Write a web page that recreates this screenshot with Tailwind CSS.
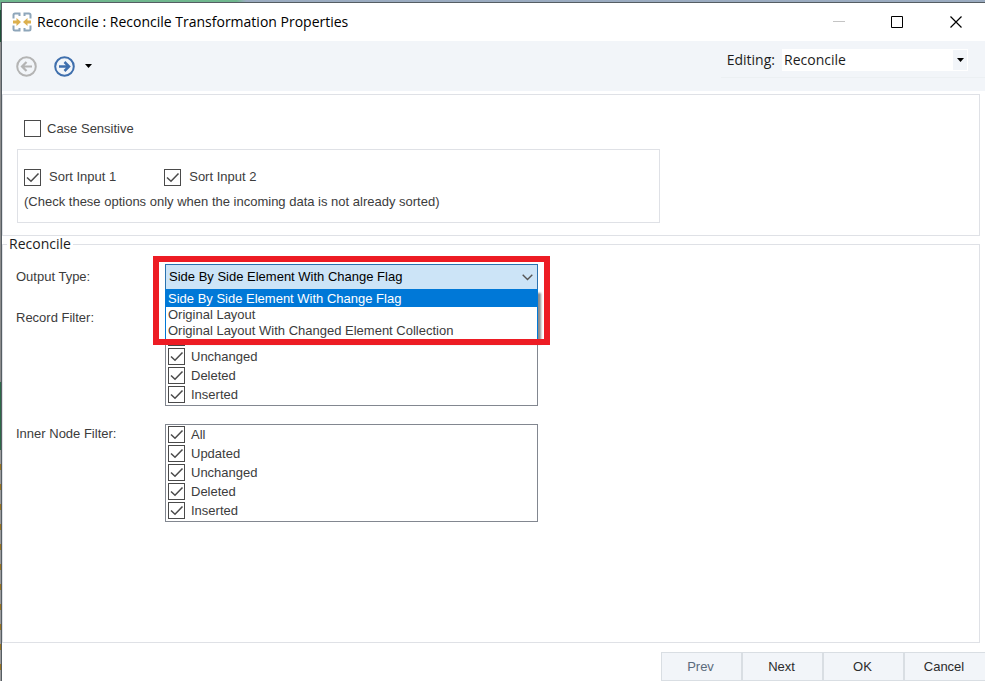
<!DOCTYPE html>
<html lang="en">
  <head>
  <meta charset="utf-8">
  <meta name="viewport" content="width=device-width, initial-scale=1">
  <title>Reconcile : Reconcile Transformation Properties</title>
  <script src="https://cdn.jsdelivr.net/npm/@tailwindcss/browser@4"></script>
</head>

  <body class="bg-white font-['Liberation_Sans',sans-serif] text-[13px] leading-5 text-[#3c3c3c] antialiased">
    <!-- desktop behind the window -->
    <div class="flex min-h-screen flex-col">
      <div class="h-[2px] bg-linear-to-r from-[#6fb78e] from-24% to-[#9aabc0] to-25%"></div>
      <div class="flex flex-1">
        <div class="flex w-px flex-col">
          <div class="h-2 bg-[#5fa57f]"></div>
          <div class="h-8 bg-[#1f5237]"></div>
          <div class="h-[340px] bg-[#8c8c8c]"></div>
          <div class="h-[68px] bg-[#2d6a48]"></div>
          <div class="flex-1 bg-[repeating-linear-gradient(#9c9c9c_0_14px,#9a7420_14px_20px)]"></div>
        </div>

        <!-- window -->
        <div class="flex flex-1 flex-col border-t border-l border-[#555d63]">
          <header class="flex h-[38px] items-center pl-[10px] font-['Open_Sans',sans-serif] text-black">
            <svg class="h-5 w-5" viewBox="0 0 20 20" fill="none">
              <path d="M1.500 6.500V3Q1.500 1.500 3 1.500H7.500V4M1.500 13.500V17Q1.500 18.500 3 18.500H7.500V16M12.500 4V1.500H17Q18.500 1.500 18.500 3V6.500M12.500 16V18.500H17Q18.500 18.500 18.500 17V13.500" stroke="#8ea6ba" stroke-width="2"/>
              <path d="M1 8.500H4.500V6L9 10L4.500 14V11.500H1ZM19 8.500H15.500V6L11 10L15.500 14V11.500H19Z" fill="#dcb04e"/>
            </svg>
            <h1 class="ml-[5px] flex-1 text-sm">Reconcile : Reconcile Transformation Properties</h1>
            <button class="flex h-full w-[58px] items-center justify-center" aria-label="Minimize">
              <svg class="h-3 w-3" viewBox="0 0 12 12"><path d="M0 5.500H12" stroke="#c4c4c4"/></svg>
            </button>
            <button class="flex h-full w-[58px] items-center justify-center" aria-label="Maximize">
              <svg class="h-3 w-3" viewBox="0 0 12 12" fill="none"><path d="M.5 .5H11.500V11.500H.5Z" stroke="#000"/></svg>
            </button>
            <button class="flex h-full w-[59px] items-center justify-center" aria-label="Close">
              <svg class="h-3 w-3" viewBox="0 0 12 12"><path d="M.5 .5L11.500 11.500M11.500 .5L.5 11.500" stroke="#000" stroke-width="1.200"/></svg>
            </button>
          </header>

          <nav class="flex h-[50px] items-center bg-[#f2f5f9] pl-[14px]">
            <button disabled aria-label="Back">
              <svg class="h-[21px] w-[21px]" viewBox="0 0 21 21" fill="none" stroke="#b4b4b4">
                <circle cx="10.500" cy="10.500" r="9.300" stroke-width="2"/>
                <path d="M16 10.500H6M10.500 6L6 10.500L10.500 15" stroke-width="2.200"/>
              </svg>
            </button>
            <button class="ml-[17px]" aria-label="Forward">
              <svg class="h-[21px] w-[21px]" viewBox="0 0 21 21" fill="none" stroke="#3f6fad">
                <circle cx="10.500" cy="10.500" r="9.300" stroke-width="2"/>
                <path d="M5 10.500H15M10.500 6L15 10.500L10.500 15" stroke-width="2.500"/>
              </svg>
            </button>
            <button class="ml-[10px]" aria-label="History">
              <svg class="h-1 w-[7px]" viewBox="0 0 7 4"><path d="M0 0H7L3.500 4Z" fill="#000"/></svg>
            </button>
            <div class="mb-[6px] ml-auto flex items-center border-b border-[#ecf0f3] pr-[17px] pb-[6px] pl-[6px] font-['Open_Sans',sans-serif] text-sm text-[#1c1c1c]">
              <label for="editing">Editing:</label>
              <div class="ml-[7px] grid w-[186px] items-center bg-white">
                <select id="editing" class="col-start-1 row-start-1 h-[22px] appearance-none pl-[2px]">
                  <option>Reconcile</option>
                </select>
                <span class="pointer-events-none col-start-1 row-start-1 mr-px flex h-5 w-[14px] items-center justify-center justify-self-end bg-[#f2f5f9]">
                  <svg class="h-1 w-[7px]" viewBox="0 0 7 4"><path d="M0 0H7L3.500 4Z" fill="#000"/></svg>
                </span>
              </div>
            </div>
          </nav>

          <main class="mt-[3px] mr-[5px] flex flex-1 flex-col">
            <section class="border border-[#dfe1e6] px-[14px] pt-[25px] pb-[12px]">
              <label class="ml-[7px] flex h-[17px] items-center gap-[6px]">
                <input type="checkbox" class="size-[17px] appearance-none border border-[#4a4a4a]">
                Case Sensitive
              </label>
              <div class="mt-[12px] h-[74px] w-[643px] max-w-full border border-[#dfe1e6] pt-[17px] pl-[6px]">
                <div class="flex gap-12">
                  <label class="flex items-center gap-2">
                    <span class="grid">
                      <input type="checkbox" checked class="peer col-start-1 row-start-1 size-[17px] appearance-none border border-[#4a4a4a]">
                      <svg class="pointer-events-none invisible col-start-1 row-start-1 size-[17px] peer-checked:visible" viewBox="0 0 17 17" fill="none"><path d="M3 8.500L7 12.200L14.500 4.500" stroke="#4a4a4a" stroke-width="1.500"/></svg>
                    </span>
                    Sort Input 1
                  </label>
                  <label class="flex items-center gap-2">
                    <span class="grid">
                      <input type="checkbox" checked class="peer col-start-1 row-start-1 size-[17px] appearance-none border border-[#4a4a4a]">
                      <svg class="pointer-events-none invisible col-start-1 row-start-1 size-[17px] peer-checked:visible" viewBox="0 0 17 17" fill="none"><path d="M3 8.500L7 12.200L14.500 4.500" stroke="#4a4a4a" stroke-width="1.500"/></svg>
                    </span>
                    Sort Input 2
                  </label>
                </div>
                <p class="mt-[5px]">(Check these options only when the incoming data is not already sorted)</p>
              </div>
            </section>

            <fieldset class="flex-1 border border-[#dfe1e6]">
              <legend class="ml-[4px] px-[2px] font-['Open_Sans',sans-serif] text-sm leading-4 text-[#1c1c1c]">Reconcile</legend>
              <div class="grid grid-cols-[149px_373px] items-start gap-y-[18px] pt-[12px] pl-[13px] leading-5">
                <label for="output-type" class="self-center">Output Type:</label>
                <div class="relative grid items-center">
                  <select id="output-type" class="col-start-1 row-start-1 h-[26px] appearance-none border border-[#2a72b0] bg-[#cce4f7] pl-[3px] text-black">
                    <option>Side By Side Element With Change Flag</option>
                    <option>Original Layout</option>
                    <option>Original Layout With Changed Element Collection</option>
                  </select>
                  <svg class="pointer-events-none col-start-1 row-start-1 mr-[5px] h-[7px] w-[11px] justify-self-end" viewBox="0 0 11 7" fill="none"><path d="M.7 .7L5.500 5.500L10.300 .7" stroke="#555" stroke-width="1.400"/></svg>
                  <!-- open list -->
                  <ul role="listbox" aria-label="Output Type" class="absolute inset-x-0 top-[25px] z-10 border border-[#0078d7] bg-white leading-4 shadow-[3px_4px_2px_rgba(0,0,0,0.45)]">
                    <li role="option" aria-selected="true" class="bg-[#0078d7] pl-[2px] leading-[17px] text-white">Side By Side Element With Change Flag</li>
                    <li role="option" class="pl-[2px]">Original Layout</li>
                    <li role="option" class="pl-[2px]">Original Layout With Changed Element Collection</li>
                  </ul>
                  <!-- highlight frame -->
                  <div class="pointer-events-none absolute -inset-x-[12px] -top-[8px] z-20 h-[89px] border-6 border-[#ed1c24]"></div>
                </div>

                <span id="record-filter">Record Filter:</span>
                <div role="group" aria-labelledby="record-filter" class="border border-[#828790] pb-px pl-[2px]">
                  <div class="flex h-[19px] items-center">
                    <input type="checkbox" checked aria-label="All" class="size-[17px] appearance-none border border-[#4a4a4a]">
                  </div>
                  <div class="flex h-[19px] items-center">
                    <input type="checkbox" checked aria-label="Updated" class="size-[17px] appearance-none border border-[#4a4a4a]">
                  </div>
                  <label class="flex h-[19px] items-center gap-[6px]">
                    <span class="grid">
                      <input type="checkbox" checked class="peer col-start-1 row-start-1 size-[17px] appearance-none border border-[#4a4a4a]">
                      <svg class="pointer-events-none invisible col-start-1 row-start-1 size-[17px] peer-checked:visible" viewBox="0 0 17 17" fill="none"><path d="M3 8.500L7 12.200L14.500 4.500" stroke="#4a4a4a" stroke-width="1.500"/></svg>
                    </span>
                    Unchanged
                  </label>
                  <label class="flex h-[19px] items-center gap-[6px]">
                    <span class="grid">
                      <input type="checkbox" checked class="peer col-start-1 row-start-1 size-[17px] appearance-none border border-[#4a4a4a]">
                      <svg class="pointer-events-none invisible col-start-1 row-start-1 size-[17px] peer-checked:visible" viewBox="0 0 17 17" fill="none"><path d="M3 8.500L7 12.200L14.500 4.500" stroke="#4a4a4a" stroke-width="1.500"/></svg>
                    </span>
                    Deleted
                  </label>
                  <label class="flex h-[19px] items-center gap-[6px]">
                    <span class="grid">
                      <input type="checkbox" checked class="peer col-start-1 row-start-1 size-[17px] appearance-none border border-[#4a4a4a]">
                      <svg class="pointer-events-none invisible col-start-1 row-start-1 size-[17px] peer-checked:visible" viewBox="0 0 17 17" fill="none"><path d="M3 8.500L7 12.200L14.500 4.500" stroke="#4a4a4a" stroke-width="1.500"/></svg>
                    </span>
                    Inserted
                  </label>
                </div>

                <span id="inner-node-filter">Inner Node Filter:</span>
                <div role="group" aria-labelledby="inner-node-filter" class="border border-[#828790] pb-px pl-[2px]">
                  <label class="flex h-[19px] items-center gap-[6px]">
                    <span class="grid">
                      <input type="checkbox" checked class="peer col-start-1 row-start-1 size-[17px] appearance-none border border-[#4a4a4a]">
                      <svg class="pointer-events-none invisible col-start-1 row-start-1 size-[17px] peer-checked:visible" viewBox="0 0 17 17" fill="none"><path d="M3 8.500L7 12.200L14.500 4.500" stroke="#4a4a4a" stroke-width="1.500"/></svg>
                    </span>
                    All
                  </label>
                  <label class="flex h-[19px] items-center gap-[6px]">
                    <span class="grid">
                      <input type="checkbox" checked class="peer col-start-1 row-start-1 size-[17px] appearance-none border border-[#4a4a4a]">
                      <svg class="pointer-events-none invisible col-start-1 row-start-1 size-[17px] peer-checked:visible" viewBox="0 0 17 17" fill="none"><path d="M3 8.500L7 12.200L14.500 4.500" stroke="#4a4a4a" stroke-width="1.500"/></svg>
                    </span>
                    Updated
                  </label>
                  <label class="flex h-[19px] items-center gap-[6px]">
                    <span class="grid">
                      <input type="checkbox" checked class="peer col-start-1 row-start-1 size-[17px] appearance-none border border-[#4a4a4a]">
                      <svg class="pointer-events-none invisible col-start-1 row-start-1 size-[17px] peer-checked:visible" viewBox="0 0 17 17" fill="none"><path d="M3 8.500L7 12.200L14.500 4.500" stroke="#4a4a4a" stroke-width="1.500"/></svg>
                    </span>
                    Unchanged
                  </label>
                  <label class="flex h-[19px] items-center gap-[6px]">
                    <span class="grid">
                      <input type="checkbox" checked class="peer col-start-1 row-start-1 size-[17px] appearance-none border border-[#4a4a4a]">
                      <svg class="pointer-events-none invisible col-start-1 row-start-1 size-[17px] peer-checked:visible" viewBox="0 0 17 17" fill="none"><path d="M3 8.500L7 12.200L14.500 4.500" stroke="#4a4a4a" stroke-width="1.500"/></svg>
                    </span>
                    Deleted
                  </label>
                  <label class="flex h-[19px] items-center gap-[6px]">
                    <span class="grid">
                      <input type="checkbox" checked class="peer col-start-1 row-start-1 size-[17px] appearance-none border border-[#4a4a4a]">
                      <svg class="pointer-events-none invisible col-start-1 row-start-1 size-[17px] peer-checked:visible" viewBox="0 0 17 17" fill="none"><path d="M3 8.500L7 12.200L14.500 4.500" stroke="#4a4a4a" stroke-width="1.500"/></svg>
                    </span>
                    Inserted
                  </label>
                </div>
              </div>
            </fieldset>
          </main>

          <footer class="mt-[9px] flex justify-end text-[#2c2c2c]">
            <button class="h-[29px] w-[81px] border border-[#d9dee3] bg-[#f2f5f9] pr-[2px] text-[#5a6b7c]">Prev</button>
            <button class="h-[29px] w-[81px] border border-[#d9dee3] bg-[#f2f5f9] pr-[2px]">Next</button>
            <button class="h-[29px] w-[81px] border border-[#d9dee3] bg-[#f2f5f9] pr-[2px]">OK</button>
            <button class="h-[29px] w-[81px] border border-r-0 border-[#d9dee3] bg-[#f2f5f9] pr-[2px]">Cancel</button>
          </footer>
        </div>
      </div>
    </div>
  </body>
</html>
